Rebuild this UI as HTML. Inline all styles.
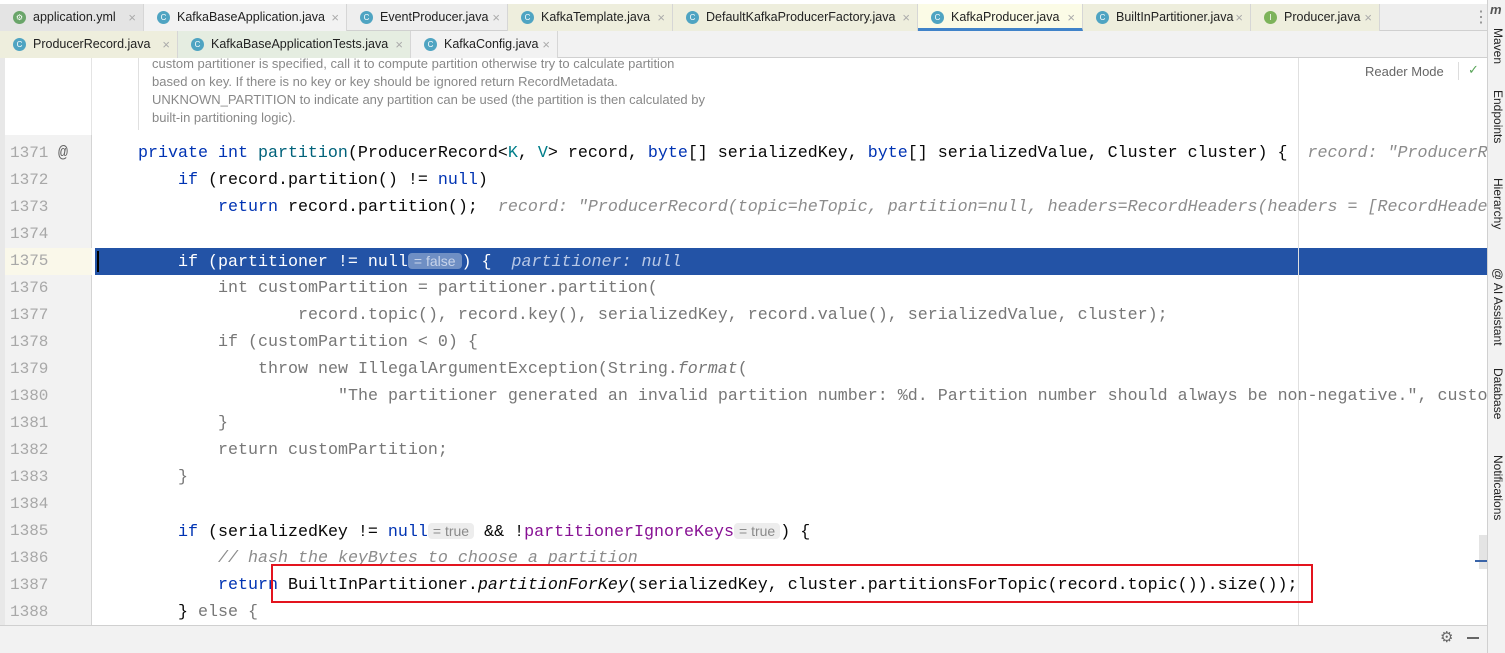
<!DOCTYPE html>
<html><head><meta charset="utf-8"><style>
*{margin:0;padding:0;box-sizing:border-box}
body{width:1505px;height:653px;overflow:hidden;background:#fff;position:relative;font-family:"Liberation Sans",sans-serif}
.tabs{position:absolute;left:0;width:1487px;height:27px;background:#f2f2f2;border-bottom:1px solid #d0d0d0}
.tab{position:absolute;top:0;height:27px;font-size:12.5px;color:#222;line-height:27px;padding-left:33px;border-right:1px solid #d6d6d6;white-space:nowrap}
.tab i{position:absolute;left:13px;top:7px;width:13px;height:13px;border-radius:50%;background:#4fa4c2;font-style:normal;font-size:8px;color:#fff;text-align:center;line-height:13px}
.tab b{position:absolute;right:7px;top:0;font-weight:normal;color:#aaa;font-size:13px}
.code{position:absolute;left:0;font-family:"Liberation Mono",monospace;font-size:16.67px;white-space:pre;height:27px;line-height:27px;color:#080808}
.ln{position:absolute;left:10px;width:40px;font-family:"Liberation Mono",monospace;font-size:16px;color:#a8a8a8;height:27px;line-height:27px}
.kw{color:#0033b3}.dim{color:#777}.cm{color:#8c8c8c;font-style:italic}.hint{color:#8c8c8c;font-style:italic}
.pf{color:#871094}
.ih{background:#ededed;color:#8a8a8a;font-family:"Liberation Sans",sans-serif;font-size:14px;border-radius:4px;padding:0 5px}
.side{position:absolute;left:1487px;top:0;width:18px;height:653px;background:#f2f2f2;border-left:1px solid #d0d0d0}
.vt{position:absolute;left:3px;font-size:12px;color:#222;writing-mode:vertical-rl}
</style></head><body>
<div class="tabs" style="top:4px;background:#eeeeee">
<div class="tab" style="left:0;width:144px;background:#e4e4e4"><i style="background:#6aa56a">⚙</i>application.yml<b>×</b></div>
<div class="tab" style="left:144px;width:203px;background:#f2f2f2"><i>C</i>KafkaBaseApplication.java<b>×</b></div>
<div class="tab" style="left:347px;width:161px"><i>C</i>EventProducer.java<b>×</b></div>
<div class="tab" style="left:508px;width:165px;background:#eeeedd"><i>C</i>KafkaTemplate.java<b>×</b></div>
<div class="tab" style="left:673px;width:245px;background:#eeeedd"><i>C</i>DefaultKafkaProducerFactory.java<b>×</b></div>
<div class="tab" style="left:918px;width:165px;background:#fbfbe6;border-bottom:3px solid #4083c9"><i>C</i>KafkaProducer.java<b>×</b></div>
<div class="tab" style="left:1083px;width:168px;background:#eeeedd"><i>C</i>BuiltInPartitioner.java<b>×</b></div>
<div class="tab" style="left:1251px;width:129px;background:#eeeedd"><i style="background:#7db35a">I</i>Producer.java<b>×</b></div>
<div style="position:absolute;left:1473px;top:0;color:#888;font-size:16px;line-height:27px">⋮</div>
</div>
<div class="tabs" style="top:31px;height:27px">
<div class="tab" style="left:0;width:178px;background:#eeeedd"><i>C</i>ProducerRecord.java<b>×</b></div>
<div class="tab" style="left:178px;width:233px;background:#e5ede1"><i>C</i>KafkaBaseApplicationTests.java<b>×</b></div>
<div class="tab" style="left:411px;width:147px;background:#f2f2f2"><i>C</i>KafkaConfig.java<b>×</b></div>
</div>
<!-- gutter -->
<div style="position:absolute;left:0;top:58px;width:5px;height:567px;background:#e8e8e8"></div>
<div style="position:absolute;left:5px;top:135px;width:87px;height:490px;background:#f2f2f2;border-right:1px solid #d4d4d4"></div>
<div style="position:absolute;left:91px;top:58px;width:1px;height:77px;background:#e4e4e4"></div>
<div style="position:absolute;left:5px;top:248px;width:87px;height:27px;background:#faf8ea"></div>
<div style="position:absolute;left:1298px;top:58px;width:1px;height:567px;background:#e0e0e0"></div>
<div style="position:absolute;left:138px;top:58px;width:1px;height:72px;background:#e0e0e0"></div>
<div style="position:absolute;left:152px;top:55px;font-size:13px;color:#888;line-height:18px">custom partitioner is specified, call it to compute partition otherwise try to calculate partition<br>based on key. If there is no key or key should be ignored return RecordMetadata.<br>UNKNOWN_PARTITION to indicate any partition can be used (the partition is then calculated by<br>built-in partitioning logic).</div>
<div style="position:absolute;left:1365px;top:64px;font-size:13px;color:#666">Reader Mode</div>
<div style="position:absolute;left:1458px;top:62px;width:1px;height:18px;background:#ddd"></div>
<div style="position:absolute;left:1468px;top:62px;font-size:13px;color:#5aa55a">✓</div>
<!-- highlight -->
<div style="position:absolute;left:95px;top:248px;width:1392px;height:27px;background:#2353a6"></div>
<div style="position:absolute;left:97px;top:251px;width:2px;height:21px;background:#000"></div>
<div style="position:absolute;left:1298px;top:248px;width:1px;height:27px;background:#e0e0e0"></div>

<div class="ln" style="top:140px">1371</div><div class="code" style="left:58px;top:140px;color:#666">@</div>
<div class="code" style="left:138px;top:140px"><span class="kw">private int</span> <span style="color:#00627a">partition</span>(ProducerRecord&lt;<span style="color:#007e8a">K</span>, <span style="color:#007e8a">V</span>&gt; record, <span class="kw">byte</span>[] serializedKey, <span class="kw">byte</span>[] serializedValue, Cluster cluster) {  <span class="hint">record: "ProducerR</span></div>
<div class="ln" style="top:167px">1372</div><div class="code" style="left:178px;top:167px"><span class="kw">if</span> (record.partition() != <span class="kw">null</span>)</div>
<div class="ln" style="top:194px">1373</div><div class="code" style="left:218px;top:194px"><span class="kw">return</span> record.partition();  <span class="hint">record: "ProducerRecord(topic=heTopic, partition=null, headers=RecordHeaders(headers = [RecordHeade</span></div>
<div class="ln" style="top:221px">1374</div>
<div class="ln" style="top:248px">1375</div><div class="code" style="left:178px;top:248px;color:#fff">if (partitioner != null<span style="background:#6f8fc4;color:#c8d4ea;font-family:'Liberation Sans',sans-serif;font-size:14px;border-radius:4px;padding:0 6px">= false</span>) {  <span style="font-style:italic;color:#b8c8e6">partitioner: null</span></div>
<div class="ln" style="top:275px">1376</div><div class="code dim" style="left:218px;top:275px">int customPartition = partitioner.partition(</div>
<div class="ln" style="top:302px">1377</div><div class="code dim" style="left:298px;top:302px">record.topic(), record.key(), serializedKey, record.value(), serializedValue, cluster);</div>
<div class="ln" style="top:329px">1378</div><div class="code dim" style="left:218px;top:329px">if (customPartition &lt; 0) {</div>
<div class="ln" style="top:356px">1379</div><div class="code dim" style="left:258px;top:356px">throw new IllegalArgumentException(String.<i>format</i>(</div>
<div class="ln" style="top:383px">1380</div><div class="code dim" style="left:338px;top:383px">"The partitioner generated an invalid partition number: %d. Partition number should always be non-negative.", custo</div>
<div class="ln" style="top:410px">1381</div><div class="code dim" style="left:218px;top:410px">}</div>
<div class="ln" style="top:437px">1382</div><div class="code dim" style="left:218px;top:437px">return customPartition;</div>
<div class="ln" style="top:464px">1383</div><div class="code dim" style="left:178px;top:464px">}</div>
<div class="ln" style="top:491px">1384</div>
<div class="ln" style="top:518px">1385</div><div class="code" style="left:178px;top:518px"><span class="kw">if</span> (serializedKey != <span class="kw">null</span><span class="ih">= true</span> &amp;&amp; !<span class="pf">partitionerIgnoreKeys</span><span class="ih">= true</span>) {</div>
<div class="ln" style="top:545px">1386</div><div class="code cm" style="left:218px;top:545px">// hash the keyBytes to choose a partition</div>
<div class="ln" style="top:572px">1387</div><div class="code" style="left:218px;top:572px"><span class="kw">return</span> BuiltInPartitioner.<i>partitionForKey</i>(serializedKey, cluster.partitionsForTopic(record.topic()).size());</div>
<div class="ln" style="top:599px">1388</div><div class="code" style="left:178px;top:599px">} <span class="dim">else {</span></div>
<div style="position:absolute;left:271px;top:564px;width:1042px;height:39px;border:2px solid #e3141e"></div>
<!-- bottom -->
<div style="position:absolute;left:0;top:625px;width:1487px;height:28px;background:#f2f2f2;border-top:1px solid #d0d0d0"></div>
<div style="position:absolute;left:1440px;top:628px;font-size:15px;color:#666">⚙</div>
<div style="position:absolute;left:1467px;top:637px;width:12px;height:2px;background:#666"></div>
<div style="position:absolute;left:1479px;top:535px;width:8px;height:34px;background:#e4e4e4"></div>
<div style="position:absolute;left:1475px;top:560px;width:12px;height:2px;background:#3a64a8"></div>
<div class="side">
<div style="position:absolute;left:2px;top:2px;font-size:13px;font-style:italic;font-weight:bold;color:#555">m</div>
<div class="vt" style="top:28px">Maven</div>
<div class="vt" style="top:90px">Endpoints</div>
<div class="vt" style="top:178px">Hierarchy</div>
<div class="vt" style="top:268px">@ AI Assistant</div>
<div class="vt" style="top:368px">Database</div>
<div class="vt" style="top:455px">Notifications</div>
</div>
</body></html>
